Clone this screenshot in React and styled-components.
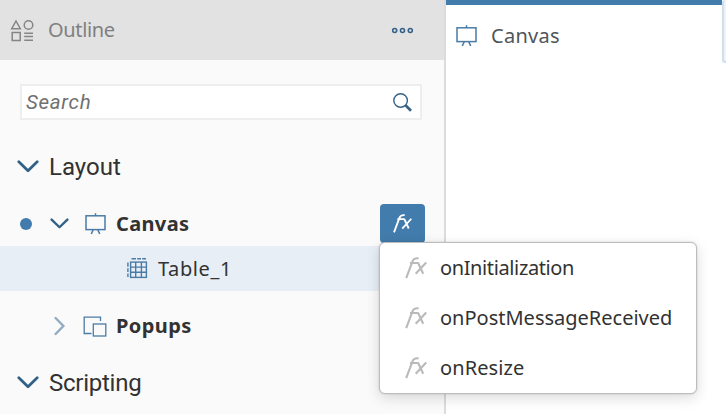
import React from "react";
import styled, { createGlobalStyle } from "styled-components";

const GlobalStyle = createGlobalStyle`
  * { box-sizing: border-box; }
  body { margin: 0; background: #fff; overflow: hidden; }
  svg { display: block; flex: none; }
`;

const App_ = styled.div`
  position: relative;
  display: flex;
  width: 726px;
  height: 414px;
  overflow: hidden;
  font-family: "Noto Sans", "Open Sans", sans-serif;
  font-size: 20px;
  color: #323232;
`;

const Sidebar = styled.aside`
  width: 446px;
  flex: none;
  background: #fafafa;
  border-right: 2px solid #dcdcdc;
`;

const Header = styled.header`
  display: flex;
  align-items: center;
  height: 60px;
  padding: 0 30px 0 10px;
  background: #e2e2e2;
  color: #808080;
`;

const Label = styled.span`
  display: block;
  font-family: ${(p) => p.$font || "inherit"};
  font-size: ${(p) => p.$size || 20}px;
  font-weight: ${(p) => p.$weight || 400};
  line-height: 30px;
  letter-spacing: ${(p) => p.$track || 0}px;
  white-space: nowrap;
`;

const Title = styled(Label)`
  flex: 1;
  margin-left: 13px;
`;

const SearchArea = styled.div`
  height: 72px;
  padding: 24px 22px 12px 20px;
`;

const SearchField = styled.label`
  display: flex;
  align-items: center;
  justify-content: space-between;
  height: 36px;
  padding: 0 7px 0 4px;
  background: #fff;
  border: 2px solid #eee;
  color: #707070;
  font-style: italic;
`;

const Section = styled.div`
  display: flex;
  align-items: center;
  height: ${(p) => p.$height}px;
  padding-left: 17px;
  gap: 10px;
`;

const TreeRow = styled.div`
  display: flex;
  align-items: center;
  height: ${(p) => p.$height}px;
  padding: 0 19px 0 ${(p) => p.$indent}px;
  background: ${(p) => (p.$selected ? "#e7eef6" : "transparent")};
`;

const Dot = styled.span`
  width: 12px;
  height: 12px;
  margin-right: 18px;
  border-radius: 50%;
  background: #427cac;
`;

const IconSlot = styled.span`
  display: flex;
  width: ${(p) => p.$width}px;
  flex: none;
`;

const Grow = styled.span`
  flex: 1;
`;

const FxButton = styled.button`
  display: flex;
  align-items: center;
  justify-content: center;
  width: 45px;
  height: 39px;
  margin-bottom: 1px;
  padding: 0;
  border: 0;
  border-radius: 4px;
  background: #427cac;
  color: #fff;
`;

const Workspace = styled.main`
  display: flex;
  flex: 1;
  align-items: flex-start;
`;

const Tab = styled.div`
  display: flex;
  align-items: center;
  width: 276px;
  height: 62px;
  padding: 4px 0 0 10px;
  gap: 14px;
  border-top: 5px solid #427cac;
  color: #51555a;
`;

const NextTab = styled.div`
  width: 12px;
  height: 63px;
  flex: none;
  border: 2px solid #d1deeb;
  border-top: 0;
  border-radius: 3px;
  background: #edf3f9;
`;

const Menu = styled.div`
  position: absolute;
  left: 379px;
  top: 242px;
  width: 318px;
  height: 152px;
  background: #fff;
  border: 1px solid #bdbdbd;
  border-radius: 6px;
  box-shadow: 0 4px 14px rgba(0, 0, 0, 0.14), 0 0 2px rgba(0, 0, 0, 0.18);
`;

const MenuItem = styled.div`
  display: flex;
  align-items: center;
  height: 50px;
  padding-left: 25px;
  gap: 13px;
`;

const BLUE = "#346187";

const OutlineIcon = () => (
  <svg width="25" height="24" viewBox="0 0 25 24" fill="none" stroke="#858585" strokeWidth="1.5">
    <path d="M6 3 L10.3 10.7 H1.7 Z" />
    <circle cx="18.5" cy="7" r="4.3" />
    <rect x="2.2" y="14.5" width="8" height="8" />
    <path d="M14.2 15.2H23M14.2 18.6H23M14.2 22.2H23" />
  </svg>
);

const MoreIcon = () => (
  <svg width="24" height="10" viewBox="0 0 24 10" fill="none" stroke={BLUE} strokeWidth="1.6">
    <circle cx="4.7" cy="5.5" r="2" />
    <circle cx="12.5" cy="5.5" r="2" />
    <circle cx="20.3" cy="5.5" r="2" />
  </svg>
);

const SearchIcon = () => (
  <svg width="20" height="20" viewBox="0 0 20 20" fill="none" stroke={BLUE}>
    <circle cx="7.6" cy="8.5" r="6.8" strokeWidth="1.4" />
    <path d="M12.5 13.3 L18 18.7" strokeWidth="2.6" />
  </svg>
);

const Easel = () => (
  <svg width="21" height="22" viewBox="0 0 21 22" fill="none" stroke="#4a7ba5" strokeWidth="1.5">
    <rect x="1" y="2.8" width="19" height="13.8" />
    <path d="M10.5 0.3V2.6M8.2 16.6L6.3 21M12.8 16.6L14.7 21" />
  </svg>
);

const Chevron = ({ width = 22, height = 14 }) => (
  <svg width={width} height={height} viewBox="0 0 22 14" fill="none" stroke={BLUE} strokeWidth="2.8" strokeLinecap="round" strokeLinejoin="round">
    <path d="M1.8 1.8 L11 10.8 L20.2 1.8" />
  </svg>
);

const ChevronRight = () => (
  <svg width="12" height="20" viewBox="0 0 12 20" fill="none" stroke="#91abc3" strokeWidth="2.4" strokeLinecap="round">
    <path d="M2.6 2 L10.4 10 L2.6 18" />
  </svg>
);

const TableIcon = () => (
  <svg width="21" height="21" viewBox="0 0 21 21" fill="none" stroke="#4a7ba5" strokeWidth="1.4">
    <rect x="3.6" y="4.1" width="15.8" height="15.3" />
    <path d="M8.7 4V19.6M14.4 4V19.6M3.7 9.1H19.6M3.7 14.3H19.6" />
    <path d="M4.5 0.7H9M10.2 0.7H14M15.2 0.7H19" />
    <path d="M0.9 4.5V8.8M0.9 10.3V14M0.9 15.5V19" />
  </svg>
);

const PopupsIcon = () => (
  <svg width="24" height="21" viewBox="0 0 24 21" fill="none" stroke="#4a7ba5" strokeWidth="1.3">
    <path d="M17.5 5V1.2H1.2V17.5H8.5" />
    <rect x="10.3" y="8" width="12.5" height="12" />
  </svg>
);

const FunctionIcon = ({ width = 22, height = 22 }) => (
  <svg width={width} height={height} viewBox="0 0 22 22" fill="none" stroke="currentColor" strokeWidth="2.1">
    <path d="M1.2 21.2 L7.3 4.8 C8.4 1.7 10 0.9 13.6 1.4M5 6H12.9" />
    <path d="M12.9 5.5 L18.2 16.8M21.2 5.5 L10.7 16.8" />
  </svg>
);

const MenuIcon = styled.span`
  color: #bababa;
`;

const handlers = [
  { name: "onInitialization", track: -0.38 },
  { name: "onPostMessageReceived", track: 0 },
  { name: "onResize", track: 0.1 },
];

export default function App() {
  return (
    <App_>
      <GlobalStyle />
      <Sidebar>
        <Header>
          <OutlineIcon />
          <Title $track={-0.35}>Outline</Title>
          <MoreIcon />
        </Header>
        <SearchArea>
          <SearchField>
            <Label $font="Roboto, sans-serif" $size={20.5} $track={0.7}>Search</Label>
            <SearchIcon />
          </SearchField>
        </SearchArea>
        <Section $height={70}>
          <Chevron />
          <Label $font="Roboto, sans-serif" $size={24}>Layout</Label>
        </Section>
        <TreeRow $height={44} $indent={20}>
          <Dot />
          <IconSlot $width={35}><Chevron width={19} height={12} /></IconSlot>
          <IconSlot $width={31}><Easel /></IconSlot>
          <Label $weight={700} $track={0.35}>Canvas</Label>
          <Grow />
          <FxButton aria-label="Scripts"><FunctionIcon width={19} height={19} /></FxButton>
        </TreeRow>
        <TreeRow $height={45} $indent={127} $selected>
          <IconSlot $width={31}><TableIcon /></IconSlot>
          <Label $track={0.6}>Table_1</Label>
        </TreeRow>
        <TreeRow $height={70} $indent={53}>
          <IconSlot $width={30}><ChevronRight /></IconSlot>
          <IconSlot $width={33}><PopupsIcon /></IconSlot>
          <Label $weight={700} $track={0.4}>Popups</Label>
        </TreeRow>
        <Section $height={44}>
          <Chevron />
          <Label $font="Roboto, sans-serif" $size={24} $track={-0.25}>Scripting</Label>
        </Section>
      </Sidebar>
      <Workspace>
        <Tab>
          <Easel />
          <Label $track={0.3}>Canvas</Label>
        </Tab>
        <NextTab />
      </Workspace>
      <Menu>
        {handlers.map((h) => (
          <MenuItem key={h.name}>
            <MenuIcon><FunctionIcon /></MenuIcon>
            <Label $track={h.track}>{h.name}</Label>
          </MenuItem>
        ))}
      </Menu>
    </App_>
  );
}
